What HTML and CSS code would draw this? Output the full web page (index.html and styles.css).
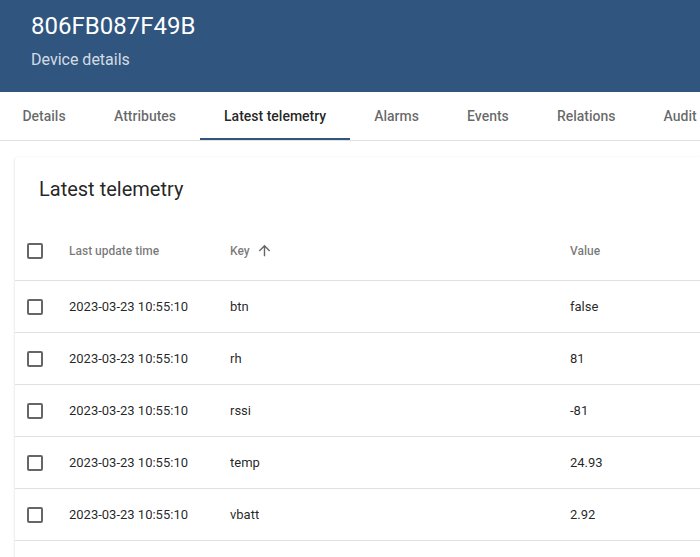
FILE: index.html
```html
<!DOCTYPE html>
<html>
<head>
<meta charset="utf-8">
<link rel="stylesheet" href="styles.css">
</head>
<body>
<header class="page-header">
  <div class="title">806FB087F49B</div>
  <div class="subtitle">Device details</div>
</header>
<nav class="tabs">
  <div class="tab first">Details</div>
  <div class="tab">Attributes</div>
  <div class="tab active">Latest telemetry</div>
  <div class="tab">Alarms</div>
  <div class="tab">Events</div>
  <div class="tab">Relations</div>
  <div class="tab">Audit Logs</div>
</nav>
<main class="content">
  <section class="card">
    <div class="card-title">Latest telemetry</div>
    <div class="table">
      <div class="row head">
        <div class="cell cb"><span class="checkbox"></span></div>
        <div class="cell">Last update time</div>
        <div class="cell">Key <svg class="sort" viewBox="0 0 24 24" width="17" height="17"><path d="M4 12l1.41 1.41L11 7.83V20h2V7.83l5.58 5.59L20 12l-8-8-8 8z"/></svg></div>
        <div class="cell">Value</div>
      </div>
      <div class="row">
        <div class="cell cb"><span class="checkbox"></span></div>
        <div class="cell">2023-03-23 10:55:10</div>
        <div class="cell">btn</div>
        <div class="cell">false</div>
      </div>
      <div class="row">
        <div class="cell cb"><span class="checkbox"></span></div>
        <div class="cell">2023-03-23 10:55:10</div>
        <div class="cell">rh</div>
        <div class="cell">81</div>
      </div>
      <div class="row">
        <div class="cell cb"><span class="checkbox"></span></div>
        <div class="cell">2023-03-23 10:55:10</div>
        <div class="cell">rssi</div>
        <div class="cell">-81</div>
      </div>
      <div class="row">
        <div class="cell cb"><span class="checkbox"></span></div>
        <div class="cell">2023-03-23 10:55:10</div>
        <div class="cell">temp</div>
        <div class="cell">24.93</div>
      </div>
      <div class="row">
        <div class="cell cb"><span class="checkbox"></span></div>
        <div class="cell">2023-03-23 10:55:10</div>
        <div class="cell">vbatt</div>
        <div class="cell">2.92</div>
      </div>
    </div>
    <div class="card-footer"></div>
  </section>
</main>
</body>
</html>
```
FILE: styles.css
```css
html, body {
  margin: 0;
  padding: 0;
  background: #ffffff;
  font-family: Roboto, "Liberation Sans", sans-serif;
  overflow: hidden;
  width: 700px;
  height: 557px;
}
.page-header {
  background: #305680;
  height: 92px;
  box-sizing: border-box;
  padding: 10px 0 0 31px;
  color: #ffffff;
}
.title {
  font-size: 24px;
  line-height: 32px;
}
.subtitle {
  font-size: 16px;
  line-height: 20px;
  margin-top: 8px;
  color: rgba(255, 255, 255, 0.8);
}
.tabs {
  display: flex;
  height: 48px;
  border-bottom: 1px solid #e0e0e0;
  white-space: nowrap;
  overflow: hidden;
}
.tab {
  flex: none;
  min-width: 90px;
  box-sizing: border-box;
  padding: 2px 24px 0;
  display: flex;
  align-items: center;
  justify-content: center;
  font-size: 14px;
  font-weight: 500;
  color: rgba(0, 0, 0, 0.6);
  border-bottom: 2px solid transparent;
}
.tab.first {
  padding-left: 22px;
}
.tab.active {
  border-bottom-color: #305680;
  color: rgba(0, 0, 0, 0.87);
}
.content {
  padding: 16px 0 0 15px;
}
.card {
  background: #ffffff;
  box-shadow: 0 1px 3px rgba(0, 0, 0, 0.16), 0 1px 1px rgba(0, 0, 0, 0.06);
  border-radius: 2px 0 0 0;
}
.card-title {
  height: 64px;
  display: flex;
  align-items: center;
  padding-left: 24px;
  font-size: 20px;
  color: rgba(0, 0, 0, 0.87);
}
.row {
  display: grid;
  grid-template-columns: 54px 161px 340px 1fr;
  height: 52px;
  box-sizing: border-box;
  border-bottom: 1px solid #e0e0e0;
  font-size: 13px;
  color: rgba(0, 0, 0, 0.87);
}
.row.head {
  height: 60px;
  font-size: 12px;
  font-weight: 500;
  color: rgba(0, 0, 0, 0.54);
  padding-top: 0;
}
.cell {
  display: flex;
  align-items: center;
  white-space: nowrap;
}
.cell.cb {
  padding-left: 12px;
}
.checkbox {
  display: block;
  width: 16px;
  height: 16px;
  box-sizing: border-box;
  border: 2px solid rgba(0, 0, 0, 0.6);
  border-radius: 2px;
}
.sort {
  margin-left: 6px;
  fill: rgba(0, 0, 0, 0.6);
}
.card-footer {
  height: 40px;
}
```
